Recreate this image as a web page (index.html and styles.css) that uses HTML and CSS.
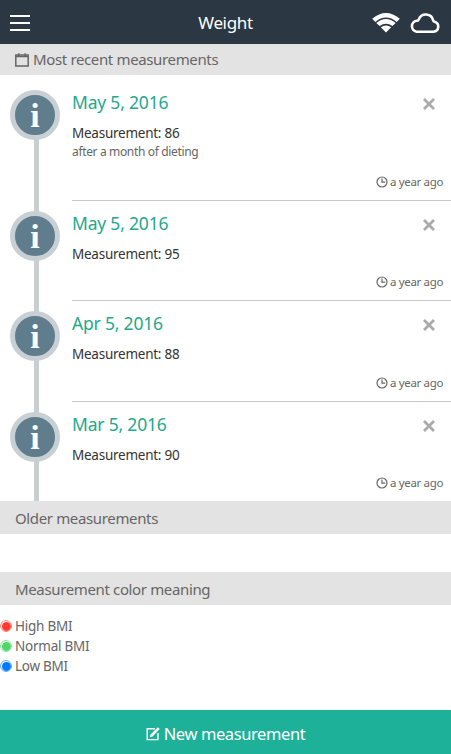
FILE: index.html
```html
<!DOCTYPE html>
<html lang="en">

<head>
    <meta charset="utf-8">
    <meta name="viewport" content="width=device-width, initial-scale=1.0">
    <title>Weight</title>
    <link rel="stylesheet" href="styles.css">
</head>

<body>
    <svg class="sprite">
        <symbol id="clock" viewBox="0 0 12 12">
            <circle cx="6" cy="6" r="5" />
            <path d="M6 2.5V6.2H9.2" />
        </symbol>
        <symbol id="close" viewBox="0 0 14 14">
            <path d="M2 2L12 12M12 2L2 12" />
        </symbol>
    </svg>

    <header class="topbar">
        <button class="menu" aria-label="Menu"><span></span><span></span><span></span></button>
        <h1>Weight</h1>
        <div class="status">
            <svg class="wifi" width="28" height="20" viewBox="0 0 28 20">
                <path d="M0.2 5.8Q14 -5.6 27.8 5.8L24.7 8.9Q14 0.2 3.3 8.9Z" />
                <path d="M4.3 9.9Q14 2.2 23.7 9.9L20.4 13.1Q14 8.2 7.6 13.1Z" />
                <path d="M8.8 14.3Q14 10.6 19.2 14.3L14 19.6Z" />
            </svg>
            <svg class="cloud" width="32" height="22" viewBox="0 0 32 22">
                <path d="M7.5 19.7H24.5A5.1 5.1 0 0 0 25.5 9.7A1.5 1.5 0 0 1 24.2 8.5A7.5 7.5 0 0 0 9.8 7.4Q9.4 8.8 8 8.8A5.5 5.5 0 0 0 7.5 19.7Z" />
            </svg>
        </div>
    </header>

    <main>
        <h2 class="bar bar-first">
            <svg class="calendar" width="14" height="14" viewBox="0 0 14 14">
                <path d="M0.8 2H13.2V13H0.8Z" />
                <path d="M1 3.4H13M3.8 0.3V3.5M10.2 0.3V3.5" />
            </svg>
            Most recent measurements
        </h2>

        <ul class="timeline">
            <li class="entry entry-note">
                <div class="marker"><span class="info">i</span></div>
                <div class="content">
                    <h3>May 5, 2016</h3>
                    <p class="value">Measurement: 86</p>
                    <p class="note">after a month of dieting</p>
                    <p class="time"><svg><use href="#clock" /></svg><span>a year ago</span></p>
                    <button class="remove" aria-label="Remove"><svg><use href="#close" /></svg></button>
                </div>
            </li>
            <li class="entry">
                <div class="marker"><span class="info">i</span></div>
                <div class="content">
                    <h3>May 5, 2016</h3>
                    <p class="value">Measurement: 95</p>
                    <p class="time"><svg><use href="#clock" /></svg><span>a year ago</span></p>
                    <button class="remove" aria-label="Remove"><svg><use href="#close" /></svg></button>
                </div>
            </li>
            <li class="entry">
                <div class="marker"><span class="info">i</span></div>
                <div class="content">
                    <h3>Apr 5, 2016</h3>
                    <p class="value">Measurement: 88</p>
                    <p class="time"><svg><use href="#clock" /></svg><span>a year ago</span></p>
                    <button class="remove" aria-label="Remove"><svg><use href="#close" /></svg></button>
                </div>
            </li>
            <li class="entry">
                <div class="marker"><span class="info">i</span></div>
                <div class="content">
                    <h3>Mar 5, 2016</h3>
                    <p class="value">Measurement: 90</p>
                    <p class="time"><svg><use href="#clock" /></svg><span>a year ago</span></p>
                    <button class="remove" aria-label="Remove"><svg><use href="#close" /></svg></button>
                </div>
            </li>
        </ul>

        <h2 class="bar">Older measurements</h2>
        <h2 class="bar bar-legend">Measurement color meaning</h2>

        <ul class="legend">
            <li><span class="dot high"></span>High BMI</li>
            <li><span class="dot normal"></span>Normal BMI</li>
            <li><span class="dot low"></span>Low BMI</li>
        </ul>
    </main>

    <button class="new">
        <svg width="14" height="14" viewBox="0 0 14 14">
            <path class="box" d="M9 1.7H1.2V12.6H12V6" />
            <path class="pen" d="M11.8 0.3L13.7 2.1L6.5 9.5L3.8 10.3L4.6 7.6Z" />
        </svg>
        <span>New measurement</span>
    </button>
</body>

</html>
```
FILE: styles.css
```css
* {
    padding: 0;
    margin: 0;
    box-sizing: border-box;
}

body {
    display: flex;
    flex-direction: column;
    height: 100vh;
    overflow: hidden;
    background-color: white;
    color: #666;
    font-family: "Noto Sans", "Open Sans", sans-serif;
}

h1,
h2,
h3 {
    font-weight: 400;
}

ul {
    list-style: none;
}

button {
    border: none;
    background: none;
    font-family: inherit;
    cursor: pointer;
}

svg {
    display: block;
    flex: none;
}

.sprite {
    position: absolute;
    width: 0;
    height: 0;
}

/* top bar */
.topbar {
    display: grid;
    grid-template-columns: 1fr auto 1fr;
    align-items: center;
    flex: none;
    height: 44px;
    padding: 0 10px;
    background-color: #2b3742;
    color: white;
}

.topbar h1 {
    font-size: 17px;
    line-height: 44px;
    letter-spacing: -0.35px;
    padding-top: 1px;
}

.menu {
    display: flex;
    flex-direction: column;
    gap: 5px;
    width: 20px;
}

.menu span {
    height: 2px;
    background-color: white;
}

.status {
    display: flex;
    justify-content: flex-end;
    gap: 9px;
}

.wifi {
    fill: white;
    margin-top: 1px;
}

.cloud {
    fill: none;
    stroke: white;
    stroke-width: 2.6;
}

/* section bars */
.bar {
    display: flex;
    align-items: center;
    height: 33px;
    padding: 2px 15px 0;
    background-color: #e3e3e3;
    font-size: 15px;
    line-height: 31px;
    letter-spacing: -0.36px;
}

.bar-first {
    height: 31px;
    padding-top: 0;
}

.bar-legend {
    margin-top: 38px;
}

.calendar {
    margin-right: 4px;
    fill: none;
    stroke: #666;
    stroke-width: 1.5;
}

/* timeline */
.timeline {
    padding-top: 5px;
    height: 426px;
}

.entry {
    display: flex;
    height: 100.4px;
}

.entry-note {
    height: 120.8px;
}

.entry:last-child {
    height: 99.4px;
}

.marker {
    flex: none;
    width: 72px;
    padding: 10px 0 0 10px;
    background: linear-gradient(#c9cfd1, #c9cfd1) 34px 0 / 5px 100% no-repeat;
}

.entry-note .marker {
    background-position: 34px 20px;
}

.info {
    display: block;
    width: 50px;
    height: 50px;
    border: 5px solid #c9d0d3;
    border-radius: 50%;
    background-color: #5f7d8c;
    color: white;
    font: bold 34px/42px "Liberation Serif", serif;
    text-align: center;
}

.content {
    position: relative;
    display: flex;
    flex-direction: column;
    flex: 1;
    padding: 9px 8px 9px 0;
    border-bottom: 1px solid #c8c8c8;
}

.entry:last-child .content {
    border-bottom: none;
}

.content h3 {
    color: #24a88c;
    font-size: 17.5px;
    line-height: 26px;
    letter-spacing: -0.2px;
}

.value {
    margin-top: 8px;
    color: #333;
    font-size: 13.5px;
    line-height: 20px;
    letter-spacing: -0.25px;
}

.note,
.time {
    font-size: 12px;
    line-height: 18px;
    letter-spacing: -0.35px;
}

.time {
    display: flex;
    justify-content: flex-end;
    align-items: center;
    gap: 2px;
    margin-top: auto;
    font-size: 11.5px;
}

.time svg {
    width: 12px;
    height: 12px;
    fill: none;
    stroke: #666;
    stroke-width: 1.2;
}

.remove {
    position: absolute;
    top: 17px;
    right: 15px;
}

.remove svg {
    width: 14px;
    height: 14px;
    stroke: #aaa;
    stroke-width: 2.8;
}

/* legend */
.legend {
    padding-top: 11px;
    font-size: 13.5px;
    line-height: 20px;
    letter-spacing: -0.25px;
}

.legend li {
    display: flex;
    align-items: center;
    gap: 3px;
}

.dot {
    width: 12px;
    height: 12px;
    border: 1px solid;
    border-radius: 50%;
    background-clip: content-box;
    padding: 0.5px;
}

.high {
    border-color: #ff8580;
    background-color: #ff3b30;
}

.normal {
    border-color: #8be89b;
    background-color: #4cd964;
}

.low {
    border-color: #63a9f5;
    background-color: #007aff;
}

/* bottom button */
.new {
    display: flex;
    justify-content: center;
    align-items: center;
    gap: 4px;
    flex: none;
    height: 44px;
    margin-top: auto;
    padding-top: 3px;
    background-color: #1db19a;
    color: white;
    font-size: 16.5px;
    letter-spacing: -0.4px;
}

.new .box {
    fill: none;
    stroke: white;
    stroke-width: 1.4;
}

.new .pen {
    fill: white;
}
```
